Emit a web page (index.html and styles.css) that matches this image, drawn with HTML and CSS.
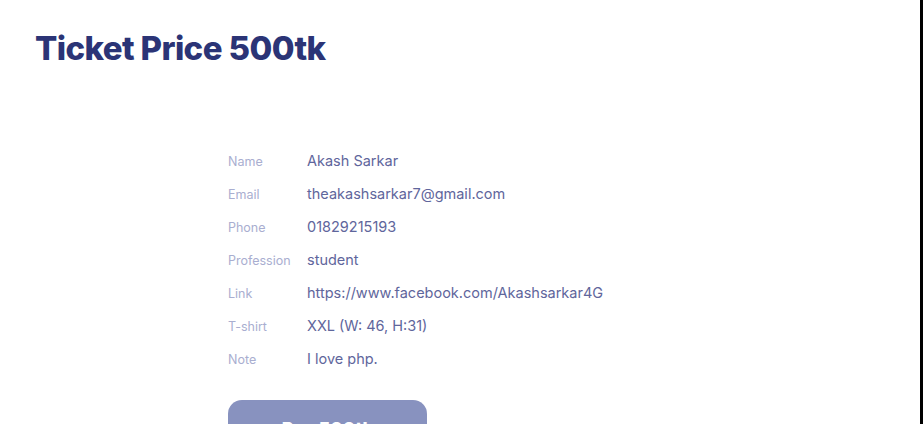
FILE: index.html
```html
<!DOCTYPE html>
<html>
<head>
<meta charset="utf-8">
<link rel="stylesheet" href="styles.css">
</head>
<body>
<div class="page">
  <main class="content">
    <h1 class="title">Ticket Price 500tk</h1>
    <div class="details">
      <dl class="info">
        <div class="row"><dt>Name</dt><dd>Akash Sarkar</dd></div>
        <div class="row"><dt>Email</dt><dd>theakashsarkar7@gmail.com</dd></div>
        <div class="row"><dt>Phone</dt><dd>01829215193</dd></div>
        <div class="row"><dt>Profession</dt><dd>student</dd></div>
        <div class="row"><dt>Link</dt><dd>https://www.facebook.com/Akashsarkar4G</dd></div>
        <div class="row"><dt>T-shirt</dt><dd>XXL (W: 46, H:31)</dd></div>
        <div class="row"><dt>Note</dt><dd>I love php.</dd></div>
      </dl>
      <button class="pay">Pay 500tk</button>
    </div>
  </main>
  <div class="edge"></div>
</div>
</body>
</html>
```

FILE: styles.css
```css
html, body {
  margin: 0;
  padding: 0;
  background: #fff;
  height: 100%;
  overflow: hidden;
}
.page {
  display: flex;
  height: 424px;
}
.content {
  flex: 1;
  padding: 26px 0 0 35px;
}
.edge {
  width: 3px;
  background: #000;
}
.title {
  margin: 0;
  font-family: Inter, "Liberation Sans", sans-serif;
  font-weight: 800;
  font-size: 33px;
  letter-spacing: -0.6px;
  color: #2b3476;
  line-height: 44px;
}
.details {
  margin: 82px 0 0 193px;
}
.info {
  margin: 0;
  display: flex;
  flex-direction: column;
}
.row {
  display: flex;
  align-items: baseline;
  height: 33px;
}
.row dt {
  width: 79px;
  font-family: Inter, "Liberation Sans", sans-serif;
  font-size: 12.5px;
  color: #a9aed0;
}
.row dd {
  margin: 0;
  font-family: Inter, "Liberation Sans", sans-serif;
  font-size: 14.5px;
  color: #5f669c;
}
.pay {
  margin-top: 17px;
  width: 199px;
  height: 56px;
  border: none;
  border-radius: 14px;
  background: #8892bf;
  color: #fff;
  font-family: Inter, "Liberation Sans", sans-serif;
  font-weight: 800;
  font-size: 18px;
  padding: 0;
}
```
